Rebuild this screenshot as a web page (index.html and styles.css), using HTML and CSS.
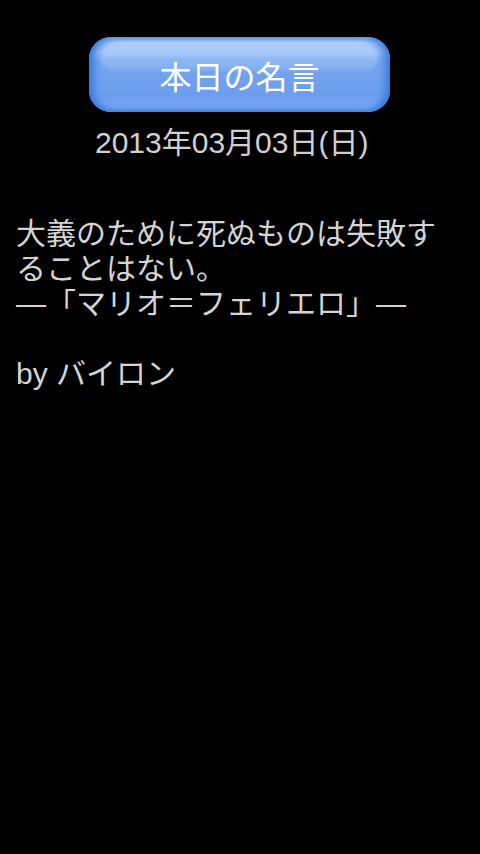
FILE: index.html
```html
<!DOCTYPE html>
<html lang="ja">
<head>
<meta charset="utf-8">
<link rel="stylesheet" href="styles.css">
</head>
<body>
<div class="screen">
  <div class="top">
    <div class="btn"><span class="gloss"></span><span class="label">本日の名言</span></div>
    <div class="date">2013年03月03日(日)</div>
  </div>
  <div class="quote">
    <div class="line">大義のために死ぬものは失敗す</div>
    <div class="line">ることはない。</div>
    <div class="line">—「マリオ＝フェリエロ」—</div>
    <div class="line blank">&nbsp;</div>
    <div class="line">by バイロン</div>
  </div>
</div>
</body>
</html>
```
FILE: styles.css
```css
html, body {
  margin: 0;
  padding: 0;
  background: #000;
}
.screen {
  width: 480px;
  height: 854px;
  background: #000;
  font-family: "Liberation Sans", "Noto Sans CJK JP", sans-serif;
  color: #d4d4d4;
  overflow: hidden;
}
.top {
  display: flex;
  flex-direction: column;
  align-items: flex-start;
  padding-top: 37px;
}
.btn {
  position: relative;
  margin-left: 89px;
  width: 301px;
  height: 75px;
  box-sizing: border-box;
  border-radius: 22px;
  background: linear-gradient(180deg, #c4dafb 0%, #9cc0f6 4%, #92b9f4 22%, #76a5ef 30%, #6c9eed 80%, #79a7ef 92%, #a9c7f5 100%);
  box-shadow: inset 5px 0 7px #3c7ddd, inset -5px 0 7px #3c7ddd, inset 0 -3px 5px #5d95e8;
  display: flex;
  align-items: center;
  justify-content: center;
}
.gloss {
  position: absolute;
  left: 12px;
  right: 12px;
  top: 4px;
  height: 30px;
  border-radius: 18px 18px 12px 12px;
  background: linear-gradient(180deg, rgba(200,222,252,0.55) 0%, rgba(170,205,250,0.25) 100%);
  filter: blur(1.5px);
}
.label {
  position: relative;
  color: #fff;
  font-family: "Noto Sans CJK JP", sans-serif;
  font-size: 32px;
  line-height: 1;
  margin-top: 0;
}
.date {
  margin-left: 95px;
  margin-top: 13px;
  font-size: 30px;
  line-height: 36px;
  color: #d0d0d0;
}
.quote {
  padding: 0 0 0 16px;
  margin-top: 55px;
  font-size: 30px;
  line-height: 35px;
  color: #d4d4d4;
}
.line {
  white-space: nowrap;
}
```
